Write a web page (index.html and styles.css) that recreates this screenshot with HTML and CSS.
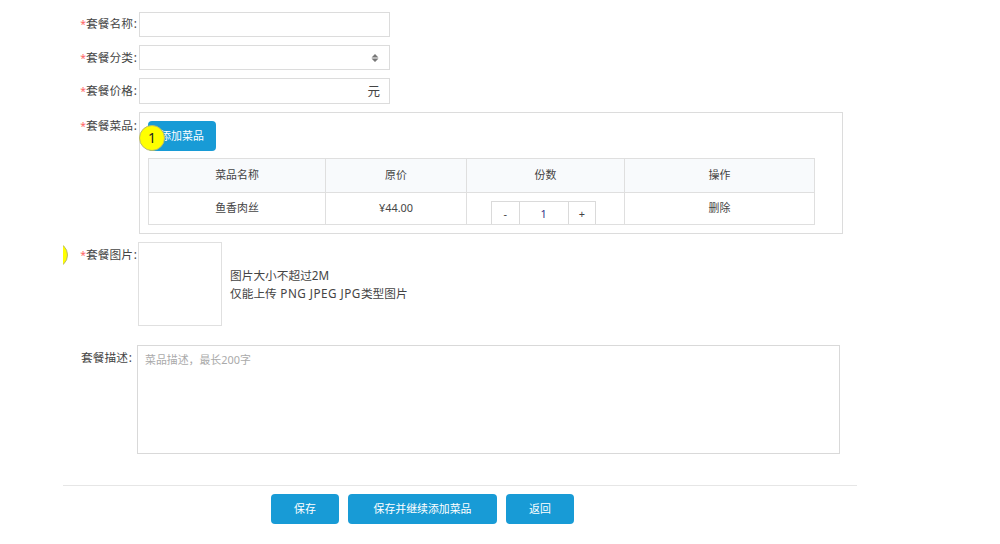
FILE: index.html
```html
<!DOCTYPE html>
<html lang="zh-CN">
<head>
<meta charset="utf-8">
<title>套餐</title>
<link rel="stylesheet" href="styles.css">
</head>
<body>
<form class="form">
  <div class="row">
    <label class="label"><i class="req">*</i>套餐名称<span class="colon">:</span></label>
    <div class="field"></div>
  </div>
  <div class="row">
    <label class="label"><i class="req">*</i>套餐分类<span class="colon">:</span></label>
    <div class="field select">
      <svg class="arrows" width="8" height="8" viewBox="0 0 8 8"><path d="M4 0L7.5 3.4H.5zM4 8L.5 4.6h7z" fill="#777"/></svg>
    </div>
  </div>
  <div class="row">
    <label class="label"><i class="req">*</i>套餐价格<span class="colon">:</span></label>
    <div class="field price">元</div>
  </div>
  <div class="row dishes">
    <label class="label"><i class="req">*</i>套餐菜品<span class="colon">:</span></label>
    <div class="panel">
      <div class="add-wrap">
        <button type="button" class="btn">添加菜品</button>
        <span class="marker">1</span>
      </div>
      <div class="table">
        <div class="cell head">菜品名称</div>
        <div class="cell head">原价</div>
        <div class="cell head">份数</div>
        <div class="cell head">操作</div>
        <div class="cell">鱼香肉丝</div>
        <div class="cell">¥44.00</div>
        <div class="cell qty-cell">
          <div class="qty"><span>-</span><span class="num">1</span><span>+</span></div>
        </div>
        <div class="cell">删除</div>
      </div>
    </div>
  </div>
  <div class="row picture">
    <span class="marker marker-edge"></span>
    <label class="label"><i class="req">*</i>套餐图片<span class="colon">:</span></label>
    <div class="upload"></div>
    <div class="hint">图片大小不超过2M<br>仅能上传<span class="formats"> PNG JPEG JPG</span>类型图片</div>
  </div>
  <div class="row description">
    <label class="label">套餐描述<span class="colon">:</span></label>
    <div class="textarea">菜品描述，最长200字</div>
  </div>
  <div class="actions">
    <button type="button" class="btn">保存</button>
    <button type="button" class="btn wide">保存并继续添加菜品</button>
    <button type="button" class="btn">返回</button>
  </div>
</form>
</body>
</html>
```

FILE: styles.css
```css
* { box-sizing: border-box; }
body {
  margin: 0;
  background: #fff;
  color: #444;
  font: 11.7px/18px "Noto Sans", "Noto Sans CJK SC", sans-serif;
}
.form {
  width: 794px;
  margin-left: 63px;
  padding-top: 12px;
  overflow: hidden;
}
.row {
  position: relative;
  display: flex;
  align-items: flex-start;
  margin-bottom: 8px;
}
.label {
  flex: none;
  width: 76px;
  padding: 3px 2px 0 0;
  text-align: right;
  white-space: nowrap;
}
.row:first-child .label { padding-top: 2px; }
.req { color: #f66; font-style: normal; font-size: 10.5px; }
.colon { margin-left: 1px; }
.field {
  width: 251px;
  height: 25px;
  border: 1px solid #dcdcdc;
}
.select {
  display: flex;
  align-items: center;
  justify-content: flex-end;
  padding-right: 10px;
}
.price {
  height: 26px;
  padding: 4px 9px 0 0;
  font-size: 12.5px;
  text-align: right;
}
.dishes .label { padding-top: 4px; }
.panel {
  width: 704px;
  height: 122px;
  padding: 8px;
  border: 1px solid #dcdcdc;
}
.add-wrap { position: relative; height: 37px; }
.btn {
  display: block;
  width: 68px;
  height: 30px;
  padding: 0 0 1px;
  border: 0;
  border-radius: 4px;
  background: #189bd6;
  color: #fff;
  font-family: inherit;
  font-size: 10.9px;
  line-height: 29px;
}
.marker {
  position: absolute;
  left: -9px;
  top: 4px;
  width: 26px;
  height: 26px;
  border: 1px solid #b9b96a;
  border-radius: 50%;
  background: #ff0;
  color: #222;
  font-size: 14px;
  line-height: 24px;
  text-align: center;
}
.marker-edge { left: -21px; top: 0; }
.table {
  display: grid;
  grid-template-columns: 177px 141px 158px 190px;
  grid-template-rows: 34px 32px;
  width: 667px;
  border: solid #dfdfdf;
  border-width: 1px 0 0 1px;
  font-size: 10.9px;
}
.cell {
  display: flex;
  align-items: center;
  justify-content: center;
  padding-bottom: 1px;
  border: solid #dfdfdf;
  border-width: 0 1px 1px 0;
}
.head { background: #f8fafc; }
.qty-cell { align-items: flex-end; padding: 0 4px 0 0; }
.qty {
  display: flex;
  width: 105px;
  height: 23px;
  border: 1px solid #dadada;
  border-bottom: 0;
  line-height: 23px;
  text-align: center;
}
.qty span { flex: 1; }
.qty .num {
  flex: none;
  width: 50px;
  border: solid #dadada;
  border-width: 0 1px;
  color: #338;
}
.picture { margin-bottom: 19px; }
.picture .label { width: 75px; padding: 3px 1px 0 0; }
.upload {
  width: 84px;
  height: 84px;
  border: 1px solid #e0e0e0;
}
.hint { padding: 24px 0 0 8px; }
.formats { letter-spacing: 0.5px; }
.description .label { width: 74px; padding-right: 5px; }
.textarea {
  width: 703px;
  height: 109px;
  padding: 5px 7px;
  border: 1px solid #d9d9d9;
  color: #aaa;
  font-size: 10.9px;
}
.actions {
  display: flex;
  gap: 9px;
  margin-top: 31px;
  padding: 8px 0 0 208px;
  border-top: 1px solid #e6e6e6;
}
.btn.wide { width: 149px; }
```
